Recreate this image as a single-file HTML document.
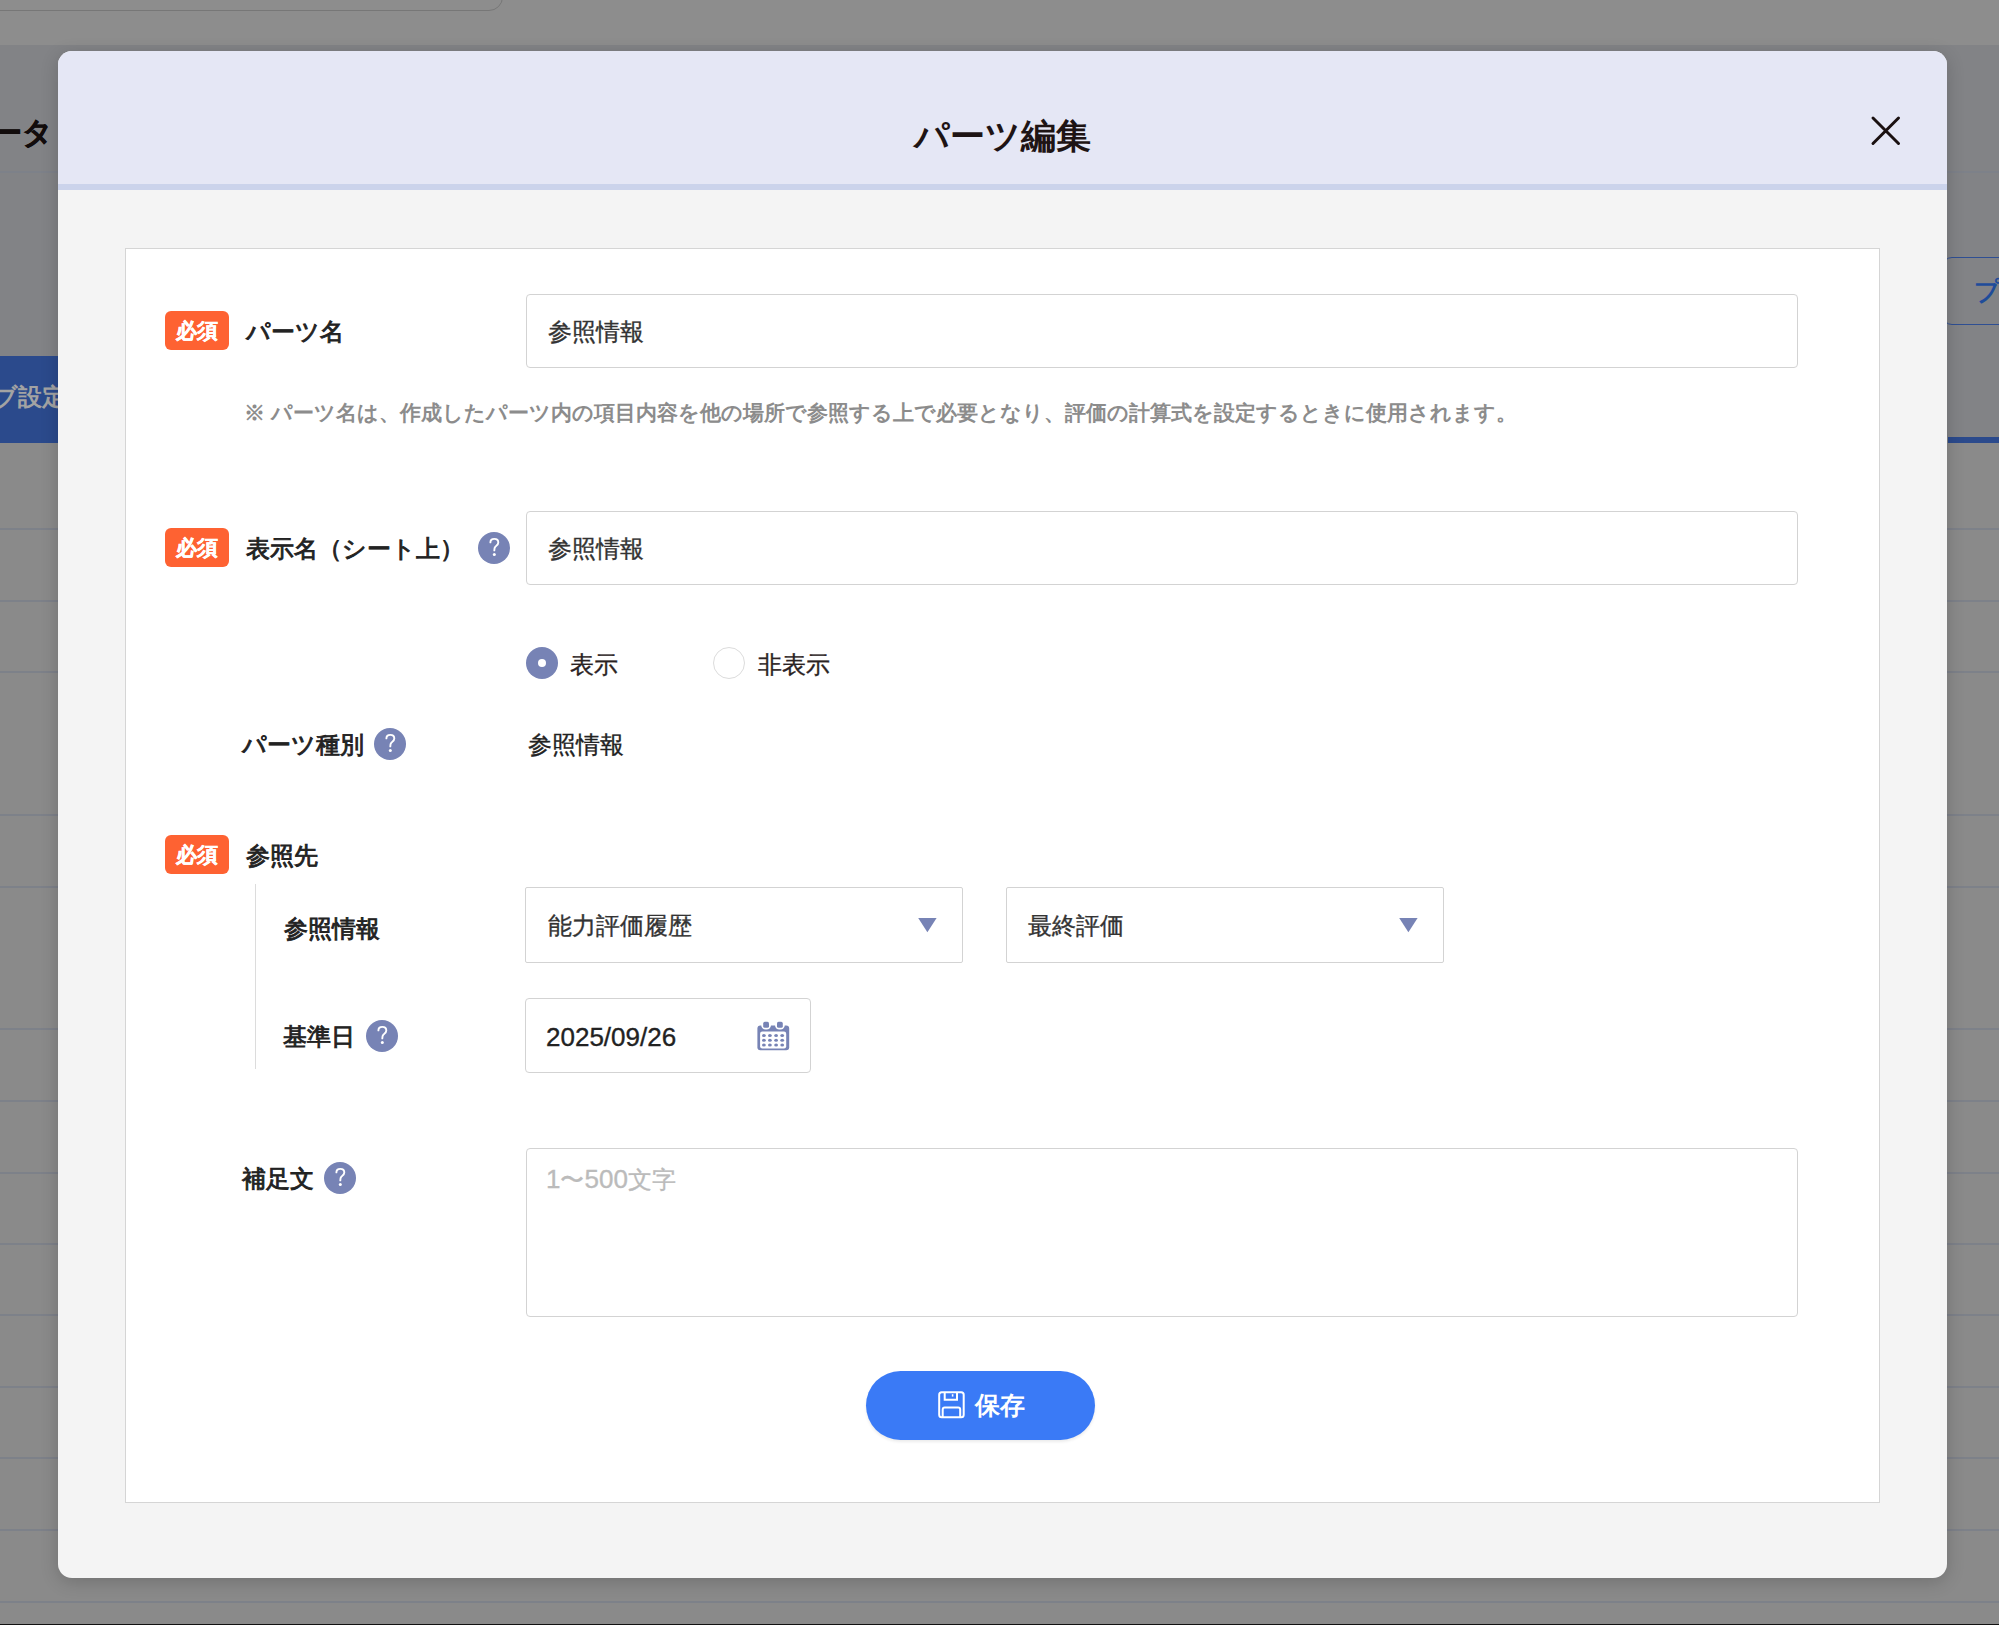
<!DOCTYPE html>
<html lang="ja">
<head>
<meta charset="utf-8">
<style>
*{box-sizing:border-box;margin:0;padding:0}
html,body{width:1999px;height:1625px;overflow:hidden}
body{position:relative;background:#8a8a8a;font-family:"Liberation Sans",sans-serif;color:#222}
.a{position:absolute;white-space:nowrap}
/* background page */
#topband{left:0;top:0;width:1999px;height:45px;background:#8d8d8d}
#search{left:-20px;top:-30px;width:523px;height:41px;border:1px solid #777;border-radius:14px}
#grayarea{left:0;top:45px;width:1999px;height:398px;background:#828386}
.bgline{left:0;width:1999px;height:2px;background:#7d8189}
#bgtitle{left:-39px;top:113px;font-size:30px;font-weight:bold;color:#120c0c;line-height:40px;-webkit-text-stroke:0.6px #120c0c}
#tab{left:0;top:356px;width:80px;height:87px;background:#2b4a8c}
#tabtext{left:-32px;top:382px;font-size:24px;font-weight:bold;color:#a3a3a3;line-height:30px}
#btnr{left:1942px;top:257px;width:120px;height:68px;border:1.5px solid #2f4f93;border-radius:10px}
#btnrtext{left:1974px;top:276px;font-size:26px;font-weight:bold;color:#1f4c9a;line-height:30px}
#tabline{left:1948px;top:437px;width:60px;height:6px;background:#2b4a8c}
#blackline{left:0;top:1624px;width:1999px;height:1px;background:#111}
/* modal */
#modal{left:58px;top:51px;width:1889px;height:1527px;border-radius:14px;background:#f4f4f4;overflow:hidden;box-shadow:0 4px 18px rgba(0,0,0,.18)}
#mhead{left:0;top:0;width:1889px;height:139px;background:#e5e7f5;border-bottom:6px solid #cbd3eb}
#mtitle{left:0;top:63px;width:1889px;height:44px;line-height:44px;text-align:center;font-size:34.6px;font-weight:bold;color:#1e1414}
#card{left:125px;top:248px;width:1755px;height:1255px;background:#fff;border:1px solid #d5d5d5}
.badge{width:64px;height:39px;background:#fe6232;border-radius:6px;color:#fff;font-size:21.2px;font-weight:bold;text-align:center;line-height:39px;-webkit-text-stroke:0.4px #fff}
.lbl{font-size:23.8px;font-weight:normal;color:#222;line-height:32px;-webkit-text-stroke:0.9px currentColor}
.inp{border:1px solid #d3d3d3;border-radius:4px;background:#fff}
.val{font-size:23.8px;color:#333;line-height:32px;-webkit-text-stroke:0.35px currentColor}
.q{width:32px;height:32px;border-radius:50%;background:#7783b5;color:#fff;font-size:22px;text-align:center;line-height:32px}
.note{font-size:21px;font-weight:bold;color:#8c8c8c;line-height:28px}
</style>
</head>
<body>
<div class="a" id="topband"></div>
<div class="a" id="search"></div>
<div class="a" id="grayarea"></div>
<div class="a" id="bgtitle">データ</div>
<div class="a bgline" style="top:171px"></div>
<div class="a" id="tab"></div>
<div class="a" id="tabtext">タブ設定</div>
<div class="a" id="btnr"></div>
<div class="a" id="btnrtext">プ</div>
<div class="a" id="tabline"></div>
<div class="a bgline" style="top:528px"></div>
<div class="a bgline" style="top:600px"></div>
<div class="a bgline" style="top:671px"></div>
<div class="a bgline" style="top:814px"></div>
<div class="a bgline" style="top:886px"></div>
<div class="a bgline" style="top:1028px"></div>
<div class="a bgline" style="top:1100px"></div>
<div class="a bgline" style="top:1172px"></div>
<div class="a bgline" style="top:1243px"></div>
<div class="a bgline" style="top:1314px"></div>
<div class="a bgline" style="top:1386px"></div>
<div class="a bgline" style="top:1457px"></div>
<div class="a bgline" style="top:1529px"></div>
<div class="a bgline" style="top:1601px"></div>
<div class="a" id="blackline"></div>

<div class="a" id="modal">
  <div class="a" id="mhead"></div>
  <div class="a" id="mtitle">パーツ編集</div>
  <svg class="a" style="left:1812px;top:64px" width="32" height="32" viewBox="0 0 32 32"><path d="M3 3L28.5 28.5M28.5 3L3 28.5" stroke="#1a1010" stroke-width="3" stroke-linecap="round" fill="none"/></svg>
</div>

<div class="a" id="card"></div>

<!-- row 1 -->
<div class="a badge" style="left:165px;top:311px">必須</div>
<div class="a lbl" style="left:246px;top:316px">パーツ名</div>
<div class="a inp" style="left:526px;top:294px;width:1272px;height:74px"></div>
<div class="a val" style="left:547.5px;top:316px">参照情報</div>
<div class="a note" style="left:244px;top:399px">※ パーツ名は、作成したパーツ内の項目内容を他の場所で参照する上で必要となり、評価の計算式を設定するときに使用されます。</div>

<!-- row 2 -->
<div class="a badge" style="left:165px;top:528px">必須</div>
<div class="a lbl" style="left:246px;top:533px">表示名（シート上）</div>
<svg class="a" style="left:478px;top:532px" width="32" height="32" viewBox="0 0 32 32"><circle cx="16" cy="16" r="16" fill="#7783b5"/><path d="M12.4 10.4C12.4 8.1 14.1 6.9 16.3 6.9C18.6 6.9 20.3 8.3 20.3 10.4C20.3 12.5 18.5 13.5 17.4 14.7C16.5 15.7 16.3 16.6 16.3 18.4" fill="none" stroke="#fff" stroke-width="1.9" stroke-linecap="round"/><circle cx="16.3" cy="22.6" r="1.5" fill="#fff"/></svg>
<div class="a inp" style="left:526px;top:511px;width:1272px;height:74px"></div>
<div class="a val" style="left:547.5px;top:533px">参照情報</div>


<!-- radios -->
<div class="a" style="left:526px;top:647px;width:32px;height:32px;border-radius:50%;background:#7783b5"></div>
<div class="a" style="left:538px;top:659px;width:8px;height:8px;border-radius:50%;background:#fff"></div>
<div class="a val" style="left:569.5px;top:649px;color:#2a2222">表示</div>
<div class="a" style="left:713px;top:647px;width:32px;height:32px;border-radius:50%;border:1.5px solid #dcdcdc;background:#fff"></div>
<div class="a val" style="left:757.5px;top:649px;color:#2a2222">非表示</div>

<!-- parts type -->
<div class="a lbl" style="left:242px;top:729px">パーツ種別</div>
<svg class="a" style="left:374px;top:728px" width="32" height="32" viewBox="0 0 32 32"><circle cx="16" cy="16" r="16" fill="#7783b5"/><path d="M12.4 10.4C12.4 8.1 14.1 6.9 16.3 6.9C18.6 6.9 20.3 8.3 20.3 10.4C20.3 12.5 18.5 13.5 17.4 14.7C16.5 15.7 16.3 16.6 16.3 18.4" fill="none" stroke="#fff" stroke-width="1.9" stroke-linecap="round"/><circle cx="16.3" cy="22.6" r="1.5" fill="#fff"/></svg>
<div class="a val" style="left:528px;top:729px;color:#222">参照情報</div>

<!-- reference -->
<div class="a badge" style="left:165px;top:835px">必須</div>
<div class="a lbl" style="left:246px;top:840px">参照先</div>
<div class="a" style="left:254.5px;top:884px;width:1.5px;height:185px;background:#dcdcdc"></div>
<div class="a lbl" style="left:283.5px;top:913px">参照情報</div>
<div class="a inp" style="left:525px;top:887px;width:438px;height:76px;border-radius:2px"></div>
<div class="a val" style="left:548px;top:910px">能力評価履歴</div>
<svg class="a" style="left:918px;top:918px" width="20" height="15" viewBox="0 0 20 15"><path d="M0.2 0H18.6L9.4 14.3Z" fill="#7783b5"/></svg>
<div class="a inp" style="left:1006px;top:887px;width:438px;height:76px;border-radius:2px"></div>
<div class="a val" style="left:1028px;top:910px">最終評価</div>
<svg class="a" style="left:1399px;top:918px" width="20" height="15" viewBox="0 0 20 15"><path d="M0.2 0H18.6L9.4 14.3Z" fill="#7783b5"/></svg>

<div class="a lbl" style="left:283px;top:1021px">基準日</div>
<svg class="a" style="left:366px;top:1020px" width="32" height="32" viewBox="0 0 32 32"><circle cx="16" cy="16" r="16" fill="#7783b5"/><path d="M12.4 10.4C12.4 8.1 14.1 6.9 16.3 6.9C18.6 6.9 20.3 8.3 20.3 10.4C20.3 12.5 18.5 13.5 17.4 14.7C16.5 15.7 16.3 16.6 16.3 18.4" fill="none" stroke="#fff" stroke-width="1.9" stroke-linecap="round"/><circle cx="16.3" cy="22.6" r="1.5" fill="#fff"/></svg>
<div class="a inp" style="left:525px;top:998px;width:286px;height:75px"></div>
<div class="a val" style="left:546px;top:1021px;color:#222;font-size:26px">2025/09/26</div>
<svg class="a" style="left:757px;top:1021px" width="33" height="30" viewBox="0 0 33 30">
  <rect x="0.4" y="4.6" width="31.8" height="24.6" rx="3" fill="#7783b5"/>
  <rect x="4.3" y="-2" width="9.6" height="10.6" rx="4.2" fill="#fff"/>
  <rect x="18.1" y="-2" width="9.6" height="10.6" rx="4.2" fill="#fff"/>
  <rect x="6.2" y="0.8" width="5.8" height="6" rx="1.6" fill="#7783b5"/>
  <rect x="20" y="0.8" width="5.8" height="6" rx="1.6" fill="#7783b5"/>
  <rect x="3.1" y="10.5" width="26.1" height="17" rx="2.2" fill="#fff"/>
  <g fill="#7783b5"><ellipse cx="6.9" cy="14.4" rx="1.9" ry="1.5"/><ellipse cx="12.9" cy="14.4" rx="1.9" ry="1.5"/><ellipse cx="19.1" cy="14.4" rx="1.9" ry="1.5"/><ellipse cx="25.2" cy="14.4" rx="1.9" ry="1.5"/><ellipse cx="6.9" cy="19.3" rx="1.9" ry="1.5"/><ellipse cx="12.9" cy="19.3" rx="1.9" ry="1.5"/><ellipse cx="19.1" cy="19.3" rx="1.9" ry="1.5"/><ellipse cx="25.2" cy="19.3" rx="1.9" ry="1.5"/><ellipse cx="6.9" cy="23.9" rx="1.9" ry="1.5"/><ellipse cx="12.9" cy="23.9" rx="1.9" ry="1.5"/><ellipse cx="19.1" cy="23.9" rx="1.9" ry="1.5"/><ellipse cx="25.2" cy="23.9" rx="1.9" ry="1.5"/></g>
</svg>

<!-- supplement -->
<div class="a lbl" style="left:242px;top:1163px">補足文</div>
<svg class="a" style="left:324px;top:1162px" width="32" height="32" viewBox="0 0 32 32"><circle cx="16" cy="16" r="16" fill="#7783b5"/><path d="M12.4 10.4C12.4 8.1 14.1 6.9 16.3 6.9C18.6 6.9 20.3 8.3 20.3 10.4C20.3 12.5 18.5 13.5 17.4 14.7C16.5 15.7 16.3 16.6 16.3 18.4" fill="none" stroke="#fff" stroke-width="1.9" stroke-linecap="round"/><circle cx="16.3" cy="22.6" r="1.5" fill="#fff"/></svg>
<div class="a inp" style="left:526px;top:1148px;width:1272px;height:169px"></div>
<div class="a val" style="left:546px;top:1163px;color:#bbb"><span style="font-size:26px">1</span>〜<span style="font-size:26px">500</span>文字</div>

<!-- save button -->
<div class="a" style="left:866px;top:1371px;width:229px;height:69px;border-radius:35px;background:#3a7af6;box-shadow:0 2px 3px rgba(0,0,0,.08)"></div>
<svg class="a" style="left:938px;top:1391px" width="28" height="29" viewBox="0 0 28 29">
  <rect x="1.2" y="1.2" width="24.5" height="25" rx="2.5" fill="none" stroke="#fff" stroke-width="2"/>
  <path d="M6.7 1.2V8.7H19V1.2" fill="none" stroke="#fff" stroke-width="2"/>
  <path d="M14.6 3.2V5.6" stroke="#fff" stroke-width="1.6"/>
  <path d="M4.7 26.2V18.5A2 2 0 0 1 6.7 16.5H20.2A2 2 0 0 1 22.2 18.5V26.2" fill="none" stroke="#fff" stroke-width="2"/>
</svg>
<div class="a" style="left:975px;top:1390px;font-size:24.5px;font-weight:bold;color:#fff;line-height:32px">保存</div>

</body>
</html>
